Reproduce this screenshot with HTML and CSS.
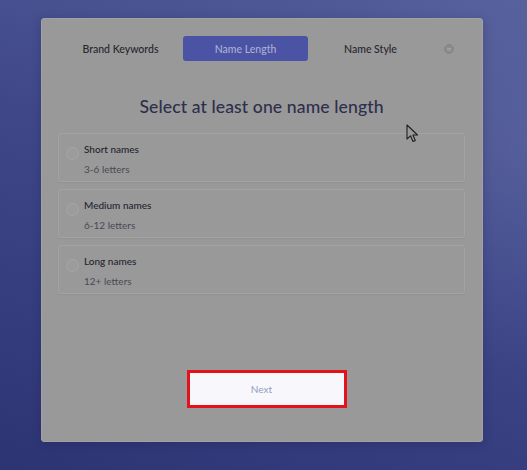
FILE: index.html
```html
<!DOCTYPE html>
<html>
<head>
<meta charset="utf-8">
<link rel="stylesheet" href="styles.css">
</head>
<body>
<div class="page">
  <div class="card">
    <div class="tabs">
      <div class="tab">Brand Keywords</div>
      <div class="tab active">Name Length</div>
      <div class="tab">Name Style</div>
      <div class="tab icon">
        <svg width="10" height="10" viewBox="0 0 10 10"><circle cx="5" cy="5" r="4.3" fill="#8c8c8c" stroke="#7e7e7e" stroke-width="0.8"/><path d="M3 4.6h4M3 6h4" stroke="#a8a8a8" stroke-width="0.8"/></svg>
      </div>
    </div>
    <h1 class="heading">Select at least one name length</h1>
    <div class="options">
      <div class="option">
        <span class="radio"></span>
        <div class="texts">
          <div class="title">Short names</div>
          <div class="sub">3-6 letters</div>
        </div>
      </div>
      <div class="option">
        <span class="radio"></span>
        <div class="texts">
          <div class="title">Medium names</div>
          <div class="sub">6-12 letters</div>
        </div>
      </div>
      <div class="option">
        <span class="radio"></span>
        <div class="texts">
          <div class="title">Long names</div>
          <div class="sub">12+ letters</div>
        </div>
      </div>
    </div>
    <div class="actions">
      <button class="next">Next</button>
    </div>
    <svg class="cursor" width="14" height="20" viewBox="0 0 14 20"><path d="M1 1 L1 15 L4.5 11.8 L7 17.5 L9.3 16.5 L6.9 11 L11.5 11 Z" fill="#9a9a9a" stroke="#1f1f24" stroke-width="1.1" stroke-linejoin="round"/></svg>
  </div>
</div>
</body>
</html>
```
FILE: styles.css
```css
* { box-sizing: border-box; }
html, body { margin: 0; padding: 0; }
body {
  width: 527px;
  height: 470px;
  overflow: hidden;
  font-family: Lato, "Open Sans", sans-serif;
}
.page {
  width: 527px;
  height: 470px;
  padding: 18px 44px 28px 41px;
  background:
    radial-gradient(ellipse 60% 70% at 100% 30%, rgba(98,108,165,0.45), rgba(98,108,165,0) 70%),
    linear-gradient(200deg, #555f9b 0%, #3f4789 45%, #2d3474 100%);
}
.card {
  position: relative;
  width: 442px;
  height: 424px;
  background: #999999;
  border: 1px solid #a2a2a4;
  border-radius: 3px;
  padding: 17px 17px 0 16px;
  display: flex;
  flex-direction: column;
  box-shadow: 0 2px 10px rgba(20,24,60,0.25);
}
.tabs {
  display: grid;
  grid-template-columns: 125px 125px 125px 1fr;
  height: 25px;
  align-items: center;
}
.tab {
  height: 25px;
  display: flex;
  align-items: center;
  justify-content: center;
  font-size: 10.5px;
  font-weight: 500;
  color: #26272f;
}
.tab.active {
  background: #4a53a4;
  color: #abafd2;
  border-radius: 3px;
}
.tab.icon { padding-top: 1px; }
.heading {
  margin: 34px 0 14px;
  text-align: center;
  font-family: Lato, "Open Sans", sans-serif;
  font-weight: 500;
  font-size: 17.6px;
  line-height: 24px;
  color: #2d2f4c;
  letter-spacing: 0.1px;
}
.options {
  display: flex;
  flex-direction: column;
  gap: 7px;
}
.option {
  height: 49px;
  border: 1px solid #a3a3a4;
  border-radius: 3px;
  box-shadow: 0 1px 2px rgba(0,0,0,0.06);
  display: flex;
  align-items: flex-start;
  padding: 8px 0 0 7px;
}
.radio {
  width: 13px;
  height: 13px;
  border-radius: 50%;
  border: 1px solid #a6a6a6;
  background: #9c9c9c;
  margin-top: 5px;
  margin-right: 5px;
  flex: none;
}
.texts {
  display: flex;
  flex-direction: column;
  gap: 6px;
}
.title {
  font-size: 10px;
  line-height: 14px;
  font-weight: 500;
  color: #24252f;
}
.sub {
  font-size: 10px;
  line-height: 14px;
  color: #4a4a54;
}
.actions {
  flex: 1;
  display: flex;
  align-items: flex-end;
  justify-content: center;
  padding-bottom: 36px;
}
.next {
  width: 154px;
  height: 32px;
  margin-left: 10px;
  padding: 0 10px 0 0;
  background: #f8f8fc;
  border: none;
  outline: 3px solid #e4121a;
  font-family: Lato, "Open Sans", sans-serif;
  font-size: 10px;
  color: #939cc6;
}
.cursor {
  position: absolute;
  left: 364px;
  top: 105px;
}
```
